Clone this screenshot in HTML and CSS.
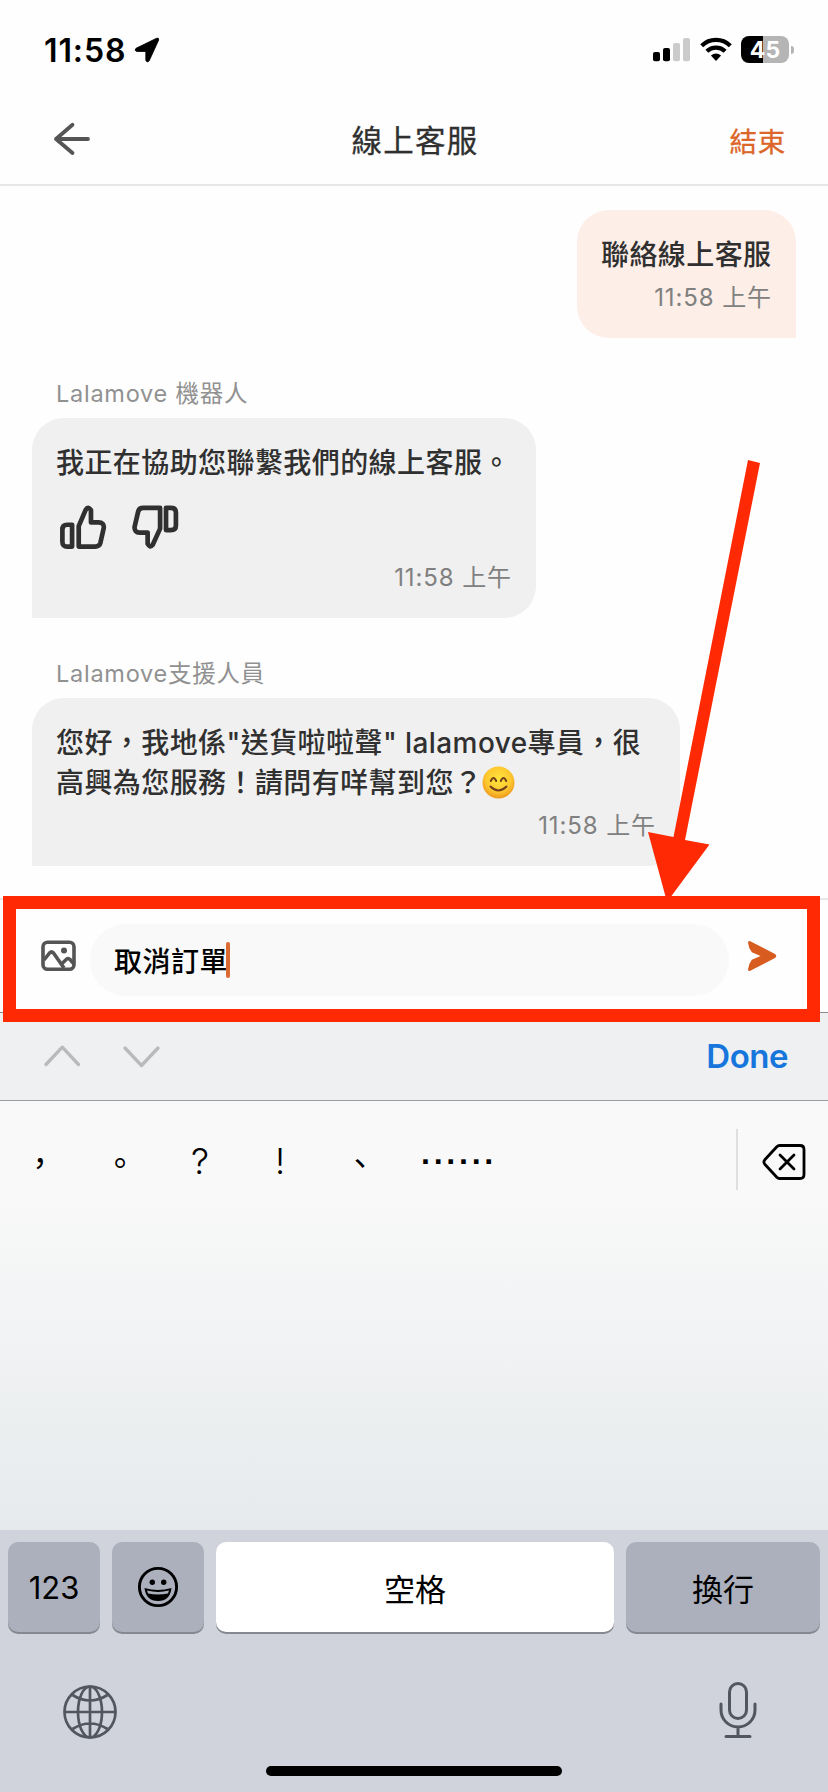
FILE: index.html
```html
<!DOCTYPE html>
<html lang="zh-Hant">
<head>
<meta charset="utf-8">
<title>線上客服</title>
<link rel="stylesheet" href="styles.css">
</head>
<body>
<div class="screen">
  <div class="status">
    <span class="clock">11:58</span>
    <svg class="location" width="26" height="26" viewBox="0 0 26 26"><path d="M2 11.300 22.500 1.300Q25 .4 24.700 3L15.200 23.800Q13 26.500 11.800 23.300V14.500H3Q-.2 13.600 2 11.300Z" stroke="#000" stroke-width=".8"/></svg>
    <svg class="signal" width="37" height="24" viewBox="0 0 37 24"><rect y="14" width="7" height="9.300" rx="2"/><rect x="10" y="10" width="7" height="13.300" rx="2"/><g fill="#cbcbcb"><rect x="20" y="5" width="7" height="18.300" rx="2"/><rect x="30" width="7" height="23.300" rx="2"/></g></svg>
    <svg class="wifi" width="32" height="25" viewBox="0 0 32 25"><g fill="none" stroke="#000" stroke-width="4.300"><path d="M1.700 8.700A20.500 20.500 0 0 1 30.300 8.700"/><path d="M6.900 14.300A13 13 0 0 1 25.100 14.300"/></g><path d="M10.900 18.600Q16 14.600 21.100 18.600L16 24Z"/></svg>
    <div class="battery"><span>45</span></div>
    <i class="battery-cap"></i>
  </div>
  <header class="header">
    <svg class="back" width="38" height="34" viewBox="0 0 38 34"><path d="M19.500 2.800 3 17l16.500 14M3 17h32" fill="none" stroke="#555" stroke-width="3.800" stroke-linecap="round" stroke-linejoin="round"/></svg>
    <h1 class="title">線上客服</h1>
    <span class="end">結束</span>
  </header>
  <main class="chat">
    <section class="bubble sent">
      <p class="text">聯絡線上客服</p>
      <time class="time">11:58 上午</time>
    </section>
    <p class="name">Lalamove 機器人</p>
    <section class="bubble bot">
      <p class="text">我正在協助您聯繫我們的線上客服。</p>
      <div class="votes">
        <svg width="49" height="47" viewBox="0 0 48 46"><g fill="none" stroke="#303030" stroke-width="4.600" stroke-linejoin="round"><path d="M13.800 19.300v21.400H9Q4.300 40.700 4.300 36V24q0-4.700 4.700-4.700Z"/><path d="M20.300 40.700V20.600L27.200 4.500Q29.400.8 32.300 5V17H39.500Q45.500 17 44.800 22.500L41.500 37.300Q40.500 40.700 36.500 40.700Z"/></g></svg>
        <svg width="49" height="47" viewBox="0 0 48 46"><g fill="none" stroke="#303030" stroke-width="4.600" stroke-linejoin="round"><path d="M34.300 2.800H39Q44 2.800 44 7.500V20Q44 24.500 39 24.500H34.300Z"/><path d="M28.500 2.800V23.100L21.300 39Q18.500 42.500 16.300 38V27H8.500Q3.200 27 3.500 21.500L7 6.500Q7.800 2.800 12 2.800Z"/></g></svg>
      </div>
      <time class="time">11:58 上午</time>
    </section>
    <p class="name">Lalamove支援人員</p>
    <section class="bubble agent">
      <p class="text">您好，我地係"送貨啦啦聲" lalamove專員，很<br>高興為您服務！請問有咩幫到您？<svg class="smile" width="33" height="33" viewBox="0 0 33 33"><defs><radialGradient id="face" cx=".5" cy=".4" r=".6"><stop offset="0" stop-color="#ffe53d"/><stop offset=".65" stop-color="#fdc82f"/><stop offset="1" stop-color="#ee971d"/></radialGradient></defs><circle cx="16.500" cy="16.500" r="16" fill="url(#face)"/><g fill="none" stroke="#72401b" stroke-width="2" stroke-linecap="round"><path d="M8.800 15q2.700-6 5.400 0M18.800 15q2.700-6 5.400 0M8.500 20.500q8 8 16 0"/></g></svg></p>
      <time class="time">11:58 上午</time>
    </section>
  </main>
  <section class="composer">
    <svg class="photo" width="36" height="32" viewBox="0 0 36 32"><g fill="none" stroke="#555" stroke-width="3.600" stroke-linejoin="round"><rect x="2" y="2.300" width="31" height="27" rx="4.500"/><path d="M3 20 8.500 13Q10.500 11 12.500 13L23 28M20 24.500 26 18.800Q27.500 18 29 19.500L33 24"/></g><circle cx="23" cy="10.500" r="3" fill="#555"/></svg>
    <div class="field"><span>取消訂單</span><i class="caret"></i></div>
    <svg class="send" width="30" height="32" viewBox="0 0 30 32"><path d="M1 2.500Q1 .4 3.300 1.200L28 14Q30.500 16 28 18L3.300 30.800Q1 31.600 1 29.500 1.500 24 4.800 19.800L13.500 16 4.800 12.200Q1.500 8 1 2.500Z" fill="#d85c20"/></svg>
  </section>
  <div class="accessory">
    <svg width="118" height="26" viewBox="0 0 118 26"><path d="M3 21.500 19.300 4.200 35.500 21.500M82 5 98.500 22.500 115 5" fill="none" stroke="#b9babb" stroke-width="3.300" stroke-linecap="round" stroke-linejoin="round"/></svg>
    <span class="done">Done</span>
  </div>
  <div class="candidates">
    <div class="marks"><span>，</span><span>。</span><span class="latin">?</span><span class="latin">!</span><span>、</span><span class="dots">······</span></div>
    <div class="delete"><svg width="44" height="38" viewBox="0 0 44 38"><g fill="none" stroke="#000" stroke-width="2.800" stroke-linecap="round" stroke-linejoin="round"><path d="M17.500 2.500H38Q42 2.500 42 6.500V31.500Q42 35.500 38 35.500H17.500Q16 35.500 14.800 34.300L2.800 21.200Q1 19 2.800 16.800L14.800 3.700Q16 2.500 17.500 2.500Z"/><path d="m18 12 14 14M32 12 18 26"/></g></svg></div>
  </div>
  <div class="keyboard">
    <div class="keys">
      <span class="key">123</span>
      <span class="key"><svg width="42" height="42" viewBox="0 0 42 42"><circle cx="21" cy="21" r="18.600" fill="none" stroke="#000" stroke-width="2.900"/><circle cx="15.300" cy="16.300" r="2.700"/><circle cx="26.700" cy="16.300" r="2.700"/><path d="M7.500 22Q21 26 34.500 22 33 35 21 35T7.500 22Z"/><path d="M10 24.600Q21 27.400 32 24.600L31 27.500Q21 29.700 11 27.500Z" fill="#abb0bc"/></svg></span>
      <span class="key space">空格</span>
      <span class="key">換行</span>
    </div>
    <div class="tools">
      <svg width="56" height="60" viewBox="0 0 56 60"><g fill="none" stroke="#52565e" stroke-width="2.700"><circle cx="28" cy="32" r="25.500"/><ellipse cx="28" cy="32" rx="12" ry="25.500"/><path d="M28 6.500v51M2.500 32h51M10.500 15Q28 26 45.500 15M10.500 49Q28 38 45.500 49"/></g></svg>
      <svg width="40" height="60" viewBox="0 0 40 60"><g fill="none" stroke="#52565e" stroke-width="3" stroke-linecap="round"><rect x="11.500" y="3.500" width="17" height="35" rx="8.500"/><path d="M3 24v6a17 17 0 0 0 34 0v-6M20 47v9M8 56.500h24"/></g></svg>
    </div>
    <i class="home"></i>
  </div>
  <div class="highlight"></div>
  <svg class="pointer" width="112" height="442" viewBox="0 0 112 442"><path d="M100 0 112 3 37 380 61.500 384.500 19 442 0 372 25.500 377Z" fill="#ff2a04"/></svg>
</div>
</body>
</html>
```
FILE: styles.css
```css
* { box-sizing: border-box; }
body, p, h1 { margin: 0; }
body { background: #fefefe; font-family: "Inter", "Noto Sans CJK TC", sans-serif; }
svg { display: block; flex: none; }
.screen { position: relative; width: 828px; height: 1792px; display: flex; flex-direction: column; overflow: hidden; background: #fefefe; }
.screen > * { flex: none; }

.status { height: 98px; padding-left: 44px; display: flex; align-items: center; }
.clock { width: 89px; font-size: 32px; font-weight: 600; line-height: 40px; letter-spacing: .9px; white-space: nowrap; margin-top: 3px; }
.location { margin: 2px 0 0 1px; }
.signal { margin: 2px 0 0 493px; }
.wifi { margin-left: 10px; }
.battery { width: 48px; height: 27px; margin: 1px 0 0 9px; border-radius: 8px; background: linear-gradient(90deg, #000 22px, #b5b5b5 22px); color: #fff; font-size: 23px; font-weight: 700; line-height: 28px; text-align: center; }
.battery-cap { width: 3px; height: 8px; margin: 2px 0 0 2px; border-radius: 0 4px 4px 0; background: #b5b5b5; }

.header { height: 88px; padding: 0 42px 0 53px; border-bottom: 2px solid #e7e7e7; display: grid; grid-template-columns: 150px 1fr 150px; align-items: center; }
.back { margin-top: -4px; }
.title { color: #303030; font-size: 30.5px; font-weight: 400; letter-spacing: 1.3px; line-height: 40px; text-align: center; padding-right: 9px; -webkit-text-stroke: .3px #303030; }
.end { color: #dc6529; font-size: 27.5px; letter-spacing: .7px; line-height: 40px; text-align: right; -webkit-text-stroke: .3px #dc6529; padding-top: 1px; }

.chat { height: 712px; padding: 24px 32px 0; display: flex; flex-direction: column; align-items: flex-start; }
.bubble { padding: 25px 24px 23px; background: #f0f0f0; border-radius: 32px 32px 32px 0; display: flex; flex-direction: column; }
.sent { width: 219px; height: 128px; align-self: flex-end; background: #fdeee7; border-radius: 32px 32px 0 32px; }
.bot { width: 504px; height: 200px; }
.agent { width: 648px; height: 168px; }
.text { color: #303030; font-size: 28px; font-weight: 500; line-height: 40px; letter-spacing: .42px; white-space: nowrap; }
.time { margin-top: 7px; color: #808080; font-size: 24px; line-height: 32px; letter-spacing: .9px; align-self: flex-end; white-space: nowrap; }
.votes { height: 72px; padding: 22px 0 0 2px; display: flex; gap: 24px; }
.name { margin: 40px 0 8px 24px; color: #919191; font-size: 23.5px; line-height: 32px; letter-spacing: .75px; }
.smile { display: inline-block; vertical-align: -6px; }

.composer { height: 114px; padding: 24px 51px 0 41px; border-top: 2px solid #e7e7e7; display: flex; align-items: flex-start; }
.photo { margin-top: 16px; }
.field { width: 640px; height: 72px; margin-left: 13px; padding: 0 0 1px 24px; border-radius: 36px; background: #f9f9f9; color: #000; font-size: 28px; font-weight: 500; letter-spacing: .5px; display: flex; align-items: center; }
.caret { width: 4px; height: 36px; margin-left: -2px; border-radius: 2px; background: #dc6b33; }
.send { margin: 16px 0 0 18px; }

.accessory { height: 89px; padding: 0 40px 2px 43px; border-top: 1px solid #8b8c8d; border-bottom: 1px solid #9a9b9c; background: #eef0f2; display: flex; align-items: center; justify-content: space-between; }
.done { color: #1676dc; font-size: 33px; font-weight: 600; line-height: 40px; letter-spacing: -.5px; }

.candidates { height: 429px; background: linear-gradient(#f9f9f9 0, #f9f9f9 90px, #e6eaec); display: flex; justify-content: space-between; }
.marks { height: 120px; display: flex; align-items: center; font-family: "Noto Sans CJK TC", sans-serif; font-size: 32px; line-height: 40px; }
.marks span { width: 80px; text-align: center; }
.marks .latin { font-family: "Inter", sans-serif; font-size: 36px; font-weight: 300; }
.marks .dots { width: 118px; font-family: "Liberation Sans", sans-serif; font-weight: 700; letter-spacing: 2px; }
.delete { width: 92px; height: 61px; margin-top: 28px; border-left: 2px solid #dedfe0; display: flex; align-items: center; padding: 5px 0 0 24px; }

.keyboard { height: 262px; background: #d0d3dc; display: flex; flex-direction: column; }
.keys { padding: 12px 8px 0; display: grid; grid-template-columns: 92px 92px 398px 194px; justify-content: space-between; }
.key { height: 90px; border-radius: 10px; background: #abb0bc; box-shadow: 0 2px #858890; color: #000; font-size: 31px; display: flex; align-items: center; justify-content: center; }
.space { background: #fff; }
.tools { padding: 48px 70px 0 62px; display: flex; justify-content: space-between; }
.home { width: 296px; height: 10px; margin: 26px 0 0 266px; border-radius: 5px; background: #000; }

.highlight { position: absolute; left: 3px; top: 896px; width: 817px; height: 126px; border: 13px solid #ff2a04; }
.pointer { position: absolute; left: 648px; top: 460px; }
```
